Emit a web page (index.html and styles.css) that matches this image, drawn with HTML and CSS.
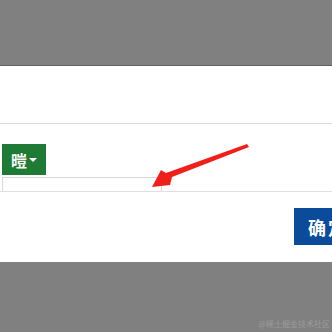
FILE: index.html
```html
<!DOCTYPE html>
<html>
<head>
<meta charset="utf-8">
<link rel="stylesheet" href="styles.css">
</head>
<body>
<div class="modal">
  <div class="modal-header"></div>
  <div class="modal-body">
    <button class="btn-green">暟<span class="caret"></span></button>
    <div class="input-row"><div class="input"></div></div>
  </div>
  <div class="modal-footer">
    <button class="btn-blue">确定</button>
  </div>
</div>
<svg class="arrow" width="332" height="332" viewBox="0 0 332 332">
  <polygon points="247,144 249,147 172,177 170,185 152,187 161,170 166,173" fill="#f01f1a"/>
</svg>
<div class="watermark">@稀土掘金技术社区</div>
</body>
</html>
```
FILE: styles.css
```css
html, body {
  margin: 0;
  padding: 0;
  background: #808080;
  width: 332px;
  height: 332px;
  overflow: hidden;
  font-family: "Noto Sans CJK SC", "Liberation Sans", sans-serif;
}
.modal {
  margin-top: 65px;
  height: 197px;
  background: #fff;
  border-top: 1px solid #5e5e5e;
  box-sizing: border-box;
  display: flex;
  flex-direction: column;
}
.modal-header {
  height: 57px;
  border-bottom: 1px solid #dcdcdc;
  flex: none;
}
.modal-body {
  padding-top: 20px;
  padding-left: 2px;
  flex: none;
  border-bottom: 1px solid #e0e0e0;
}
.btn-green {
  display: flex;
  align-items: center;
  width: 44px;
  height: 31px;
  margin: 0;
  padding: 0 0 0 9px;
  border: none;
  background: #1f7a36;
  color: #fff;
  font-size: 16px;
  font-weight: bold;
  font-family: "Noto Sans CJK SC", sans-serif;
  box-sizing: border-box;
}
.caret {
  display: inline-block;
  width: 0;
  height: 0;
  border-left: 4px solid transparent;
  border-right: 4px solid transparent;
  border-top: 4px solid #fff;
  margin-left: 2px;
}
.input-row {
  display: flex;
  margin-top: 2px;
}
.input {
  width: 158px;
  height: 13px;
  border: 1px solid #d8d8d8;
  border-bottom: none;
  box-sizing: content-box;
}
.modal-footer {
  padding-top: 16px;
  display: flex;
  justify-content: flex-start;
  padding-left: 294px;
}
.btn-blue {
  flex: none;
  width: 38px;
  height: 37px;
  margin: 0;
  padding: 0 0 0 14px;
  border: none;
  background: #0a4b9c;
  color: #fff;
  font-size: 18px;
  font-weight: bold;
  letter-spacing: 2px;
  text-align: left;
  white-space: nowrap;
  overflow: hidden;
  font-family: "Noto Sans CJK SC", sans-serif;
  box-sizing: border-box;
}
.arrow {
  position: absolute;
  left: 0;
  top: 0;
}
.watermark {
  position: absolute;
  right: 2px;
  top: 318px;
  font-size: 8px;
  color: #9c9c9c;
}
```
